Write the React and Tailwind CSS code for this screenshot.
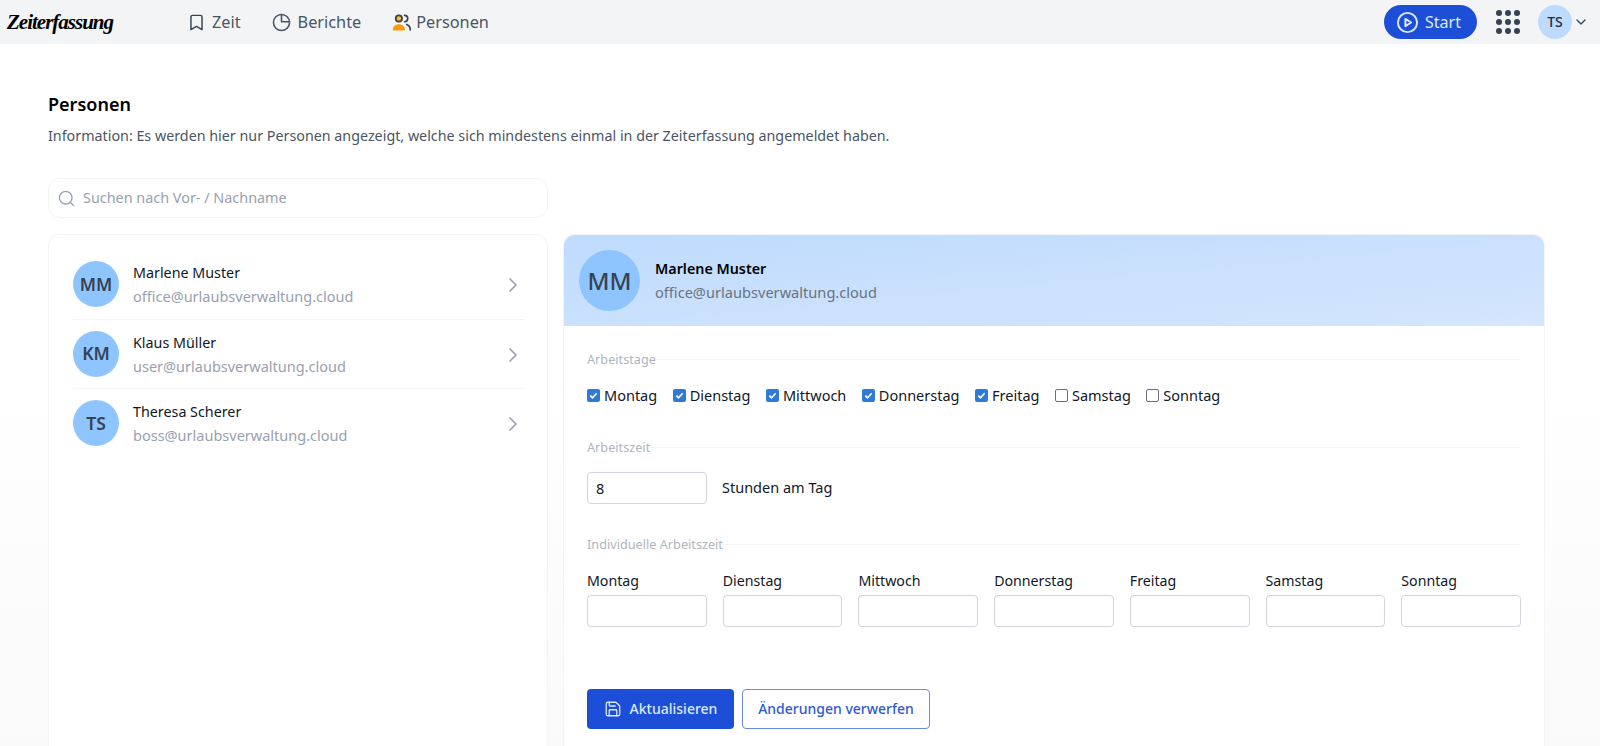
import { Bookmark, ChevronDown, ChevronRight, Search, Save } from "lucide-react";

const people = [
  { initials: "MM", name: "Marlene Muster", email: "office@urlaubsverwaltung.cloud" },
  { initials: "KM", name: "Klaus Müller", email: "user@urlaubsverwaltung.cloud" },
  { initials: "TS", name: "Theresa Scherer", email: "boss@urlaubsverwaltung.cloud" },
];

const days = [
  { name: "Montag", checked: true },
  { name: "Dienstag", checked: true },
  { name: "Mittwoch", checked: true },
  { name: "Donnerstag", checked: true },
  { name: "Freitag", checked: true },
  { name: "Samstag", checked: false },
  { name: "Sonntag", checked: false },
];

function PieIcon() {
  return (
    <svg viewBox="0 0 24 24" fill="none" stroke="currentColor" strokeWidth="1.8" strokeLinecap="round" strokeLinejoin="round" className="h-[21px] w-[21px]">
      <circle cx="12" cy="12" r="9.2" />
      <path d="M12 2.8v8.4h9.2" />
    </svg>
  );
}

function PeopleIcon() {
  return (
    <svg viewBox="0 0 24 24" className="h-[21px] w-[21px]">
      <path d="M2 21c0-4.5 2.8-7 7-7s7 2.5 7 7z" fill="#f59e0b" />
      <circle cx="9" cy="7.5" r="3.6" fill="#fbbf24" stroke="#374151" strokeWidth="2" />
      <path d="M15.5 3.9a3.6 3.6 0 0 1 0 7.2M18 14.2c2.4.8 4 3 4 6.3" fill="none" stroke="#374151" strokeWidth="1.9" strokeLinecap="round" />
    </svg>
  );
}

function PlayIcon() {
  return (
    <svg viewBox="0 0 24 24" fill="none" stroke="currentColor" strokeWidth="2" strokeLinejoin="round" className="h-[23px] w-[23px]">
      <circle cx="12" cy="12" r="10" />
      <path d="M9.8 8.2l6 3.8-6 3.8z" />
    </svg>
  );
}

function GridIcon() {
  return (
    <div className="grid grid-cols-3 gap-[3px]">
      {Array.from({ length: 9 }).map((_, i) => (
        <span key={i} className="h-[6px] w-[6px] rounded-full bg-gray-700" />
      ))}
    </div>
  );
}

function Legend({ children }) {
  return (
    <div className="flex items-center text-[12.7px] text-[#b0b5bd]">
      <span>{children}</span>
      <div className="h-px flex-1 bg-gray-100" />
    </div>
  );
}

function DayCheck({ day }) {
  return (
    <label className="flex items-center gap-[4px] text-[14.5px] text-gray-900">
      {day.checked ? (
        <span className="flex h-[13px] w-[13px] items-center justify-center rounded-[2px] bg-[#2f7ad9]">
          <svg viewBox="0 0 12 12" fill="none" stroke="white" strokeWidth="1.8" className="h-[11px] w-[11px]">
            <path d="M2.5 6.2l2.4 2.4 4.6-5" />
          </svg>
        </span>
      ) : (
        <span className="h-[13px] w-[13px] rounded-[2px] border border-gray-500 bg-white" />
      )}
      {day.name}
    </label>
  );
}

export default function App() {
  return (
    <div className="flex h-screen flex-col overflow-hidden bg-gradient-to-b from-white from-50% to-[#fafafa] font-['Noto_Sans',sans-serif] text-gray-900">
      {/* Top navigation */}
      <header className="flex h-11 shrink-0 items-center bg-[#f3f4f6] pl-[7px] pr-[11px]">
        <span className="w-[180px] font-['Liberation_Serif',serif] text-[21px] font-bold italic leading-none tracking-[-1px] text-black">Zeiterfassung</span>
        <nav className="flex items-center gap-[30px] text-[16.3px] text-gray-600">
          <a className="flex items-center gap-[6px]">
            <Bookmark className="h-[19px] w-[19px] text-gray-700" strokeWidth={1.8} />
            Zeit
          </a>
          <a className="flex items-center gap-[6px]">
            <PieIcon />
            Berichte
          </a>
          <a className="flex items-center gap-[4px]">
            <PeopleIcon />
            Personen
          </a>
        </nav>
        <div className="ml-auto flex items-center">
          <button className="flex h-[34px] w-[93px] items-center gap-[6px] rounded-full bg-[#1d4ed8] pl-[12px] text-base text-blue-100">
            <PlayIcon />
            Start
          </button>
          <div className="ml-[19px]">
            <GridIcon />
          </div>
          <div className="ml-[18px] flex h-[34px] w-[34px] items-center justify-center rounded-full bg-blue-200 text-sm font-medium text-gray-800">TS</div>
          <ChevronDown className="ml-[1px] h-4 w-4 text-gray-700" />
        </div>
      </header>

      <main className="flex min-h-0 flex-1 flex-col pl-12 pr-[55px] pt-[50px]">
        <h1 className="text-lg font-semibold leading-[21px] text-black">Personen</h1>
        <p className="mt-[11px] text-[14.3px] leading-[20px] text-gray-600">
          Information: Es werden hier nur Personen angezeigt, welche sich mindestens einmal in der Zeiterfassung angemeldet haben.
        </p>

        <div className="mt-[32px] flex h-10 w-[500px] items-center gap-[7px] rounded-xl border border-gray-100 bg-white px-[8px]">
          <Search className="h-[19px] w-[19px] text-gray-400" strokeWidth={1.7} />
          <span className="text-[14.4px] text-gray-400">Suchen nach Vor- / Nachname</span>
        </div>

        <div className="mt-4 flex min-h-0 flex-1 gap-[15px]">
          {/* Person list */}
          <div className="w-[500px] shrink-0 rounded-t-xl border border-b-0 border-gray-100 bg-white pl-6 pr-[22px] pt-[15px]">
            {people.map((person, index) => (
              <div key={person.email} className={"flex h-[69.5px] items-start pt-[11px] border-gray-100 " + (index < 2 ? "border-b" : "")}>
                <div className="flex h-[46px] w-[46px] shrink-0 items-center justify-center rounded-full bg-blue-300 text-[17.5px] font-semibold text-gray-700">{person.initials}</div>
                <div className="ml-[14px] min-w-0 flex-1 pt-[2px]">
                  <div className="text-[14.3px] leading-[20px] text-gray-900">{person.name}</div>
                  <div className="mt-[3px] text-[14.5px] leading-[20px] text-gray-400">{person.email}</div>
                </div>
                <ChevronRight className="mt-[12px] h-[24px] w-[24px] text-gray-400" strokeWidth={1.7} />
              </div>
            ))}
          </div>

          {/* Detail panel */}
          <div className="flex min-w-0 flex-1 flex-col overflow-hidden rounded-t-xl border border-b-0 border-gray-100 bg-white">
            <div className="flex h-[91px] shrink-0 items-center bg-gradient-to-br from-[#bfdbfe] to-[#d5e6fd] pl-[15px]">
              <div className="flex h-[61px] w-[61px] items-center justify-center rounded-full bg-blue-300 text-2xl font-medium text-gray-700">MM</div>
              <div className="ml-[15px]">
                <div className="text-[14.3px] font-semibold leading-[20px] text-black">Marlene Muster</div>
                <div className="mt-[3px] text-[14.6px] leading-[20px] text-gray-500">office@urlaubsverwaltung.cloud</div>
              </div>
            </div>

            <div className="px-[23px] pt-[24px]">
              <Legend>Arbeitstage</Legend>
              <div className="mt-[16px] flex gap-[15.5px]">
                {days.map((day) => (
                  <DayCheck key={day.name} day={day} />
                ))}
              </div>

              <div className="mt-[31px]">
                <Legend>Arbeitszeit</Legend>
              </div>
              <div className="mt-[15px] flex items-center gap-[15px]">
                <input readOnly value="8" className="h-[32px] w-[120px] rounded border border-gray-300 bg-white px-2 text-[14.5px] text-gray-900 outline-none" />
                <span className="text-[14.5px]">Stunden am Tag</span>
              </div>

              <div className="mt-[31px]">
                <Legend>Individuelle Arbeitszeit</Legend>
              </div>
              <div className="mt-[16px] grid grid-cols-7 gap-4">
                {days.map((day) => (
                  <div key={day.name}>
                    <div className="text-[14.2px] leading-[22px]">{day.name}</div>
                    <input readOnly className="mt-[3px] block h-[32px] w-full rounded border border-gray-300 bg-white outline-none" />
                  </div>
                ))}
              </div>

              <div className="mt-[62px] flex gap-2">
                <button className="flex h-10 w-[147px] items-center justify-center gap-2 rounded bg-[#1d4ed8] text-sm font-medium text-blue-100">
                  <Save className="h-[18px] w-[18px]" strokeWidth={1.7} />
                  Aktualisieren
                </button>
                <button className="flex h-10 w-[188px] items-center justify-center rounded border border-[#6a8be0] bg-white text-sm font-medium text-[#2c5bd6]">Änderungen verwerfen</button>
              </div>
            </div>
          </div>
        </div>
      </main>
    </div>
  );
}
